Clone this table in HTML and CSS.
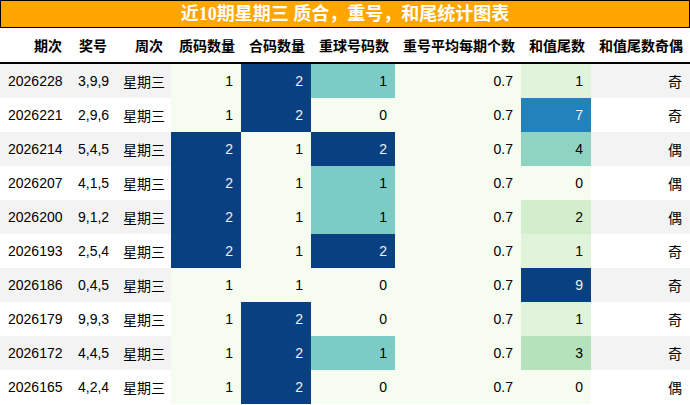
FILE: index.html
```html
<!DOCTYPE html>
<html>
<head>
<meta charset="utf-8">
<link rel="stylesheet" href="styles.css">
</head>
<body>
<div class="title">近10期星期三 质合，重号，和尾统计图表</div>
<table class="grid">
<colgroup>
<col class="w70"><col class="w45"><col class="w56"><col class="w70"><col class="w70"><col class="w84"><col class="w126"><col class="w70"><col class="w99">
</colgroup>
<thead>
<tr><th>期次</th><th>奖号</th><th>周次</th><th>质码数量</th><th>合码数量</th><th>重球号码数</th><th>重号平均每期个数</th><th>和值尾数</th><th>和值尾数奇偶</th></tr>
</thead>
<tbody>
<tr class="odd"><td>2026228</td><td>3,9,9</td><td>星期三</td><td class="c0">1</td><td class="c9 lt">2</td><td class="c5">1</td><td class="c0">0.7</td><td class="h1">1</td><td>奇</td></tr>
<tr><td>2026221</td><td>2,9,6</td><td>星期三</td><td class="c0">1</td><td class="c9 lt">2</td><td class="c0">0</td><td class="c0">0.7</td><td class="h7 lt">7</td><td>奇</td></tr>
<tr class="odd"><td>2026214</td><td>5,4,5</td><td>星期三</td><td class="c9 lt">2</td><td class="c0">1</td><td class="c9 lt">2</td><td class="c0">0.7</td><td class="h4">4</td><td>偶</td></tr>
<tr><td>2026207</td><td>4,1,5</td><td>星期三</td><td class="c9 lt">2</td><td class="c0">1</td><td class="c5">1</td><td class="c0">0.7</td><td class="c0">0</td><td>偶</td></tr>
<tr class="odd"><td>2026200</td><td>9,1,2</td><td>星期三</td><td class="c9 lt">2</td><td class="c0">1</td><td class="c5">1</td><td class="c0">0.7</td><td class="h2">2</td><td>偶</td></tr>
<tr><td>2026193</td><td>2,5,4</td><td>星期三</td><td class="c9 lt">2</td><td class="c0">1</td><td class="c9 lt">2</td><td class="c0">0.7</td><td class="h1">1</td><td>奇</td></tr>
<tr class="odd"><td>2026186</td><td>0,4,5</td><td>星期三</td><td class="c0">1</td><td class="c0">1</td><td class="c0">0</td><td class="c0">0.7</td><td class="c9 lt">9</td><td>奇</td></tr>
<tr><td>2026179</td><td>9,9,3</td><td>星期三</td><td class="c0">1</td><td class="c9 lt">2</td><td class="c0">0</td><td class="c0">0.7</td><td class="h1">1</td><td>奇</td></tr>
<tr class="odd"><td>2026172</td><td>4,4,5</td><td>星期三</td><td class="c0">1</td><td class="c9 lt">2</td><td class="c5">1</td><td class="c0">0.7</td><td class="h3">3</td><td>奇</td></tr>
<tr><td>2026165</td><td>4,2,4</td><td>星期三</td><td class="c0">1</td><td class="c9 lt">2</td><td class="c0">0</td><td class="c0">0.7</td><td class="c0">0</td><td>偶</td></tr>
</tbody>
</table>
</body>
</html>
```
FILE: styles.css
```css
html, body {
  margin: 0;
  padding: 0;
  background: #fff;
}
body {
  width: 690px;
  font-family: "Liberation Sans", "Noto Sans CJK SC", sans-serif;
  font-size: 14px;
  color: #000;
}
.title {
  box-sizing: border-box;
  height: 28px;
  border: 1px solid #000;
  background: #ffa500;
  color: #fff;
  font-family: "Liberation Serif", "Noto Sans CJK SC", serif;
  font-weight: bold;
  font-size: 18px;
  line-height: 26px;
  text-align: center;
}
.grid {
  width: 690px;
  table-layout: fixed;
  border-collapse: collapse;
  border-spacing: 0;
}
.w70 { width: 70px; }
.w45 { width: 45px; }
.w56 { width: 56px; }
.w84 { width: 84px; }
.w126 { width: 126px; }
.w99 { width: 99px; }
.grid th, .grid td {
  padding: 0 8px;
  text-align: right;
  vertical-align: middle;
  white-space: nowrap;
  overflow: hidden;
}
.grid th {
  height: 34px;
  font-weight: bold;
  border-bottom: 2px solid #000;
}
.grid td {
  height: 34px;
}
.odd td { background: #f3f3f3; }
.grid td.c0 { background: #f7fcf0; }
.grid td.c5 { background: #7bccc4; }
.grid td.c9 { background: #084081; }
.grid td.h1 { background: #e0f3db; }
.grid td.h2 { background: #d3eecd; }
.grid td.h3 { background: #b5e2bb; }
.grid td.h4 { background: #8fd4c2; }
.grid td.h7 { background: #2182bc; }
.grid td.lt { color: #f1f1f1; }
```
